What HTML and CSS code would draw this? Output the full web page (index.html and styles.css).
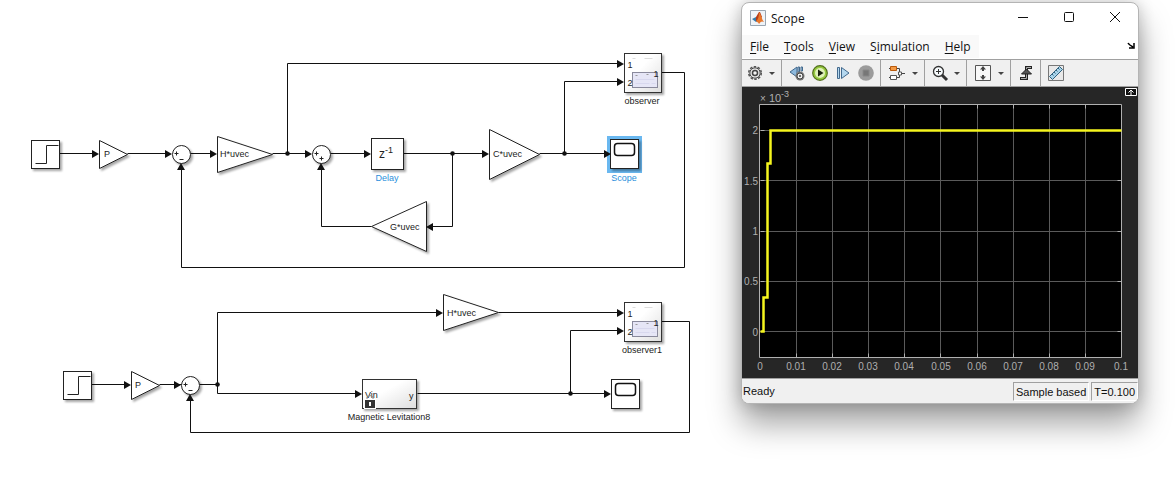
FILE: index.html
```html
<!DOCTYPE html>
<html lang="en">
<head>
<meta charset="utf-8">
<title>Scope</title>
<link rel="stylesheet" href="styles.css">
</head>
<body>
<main class="desk">
  <svg class="model" viewBox="0 0 700 491" role="img" aria-label="Block diagram">
    <defs>
      <filter id="shade" x="-20%" y="-20%" width="150%" height="150%">
        <feDropShadow dx="2" dy="2" stdDeviation="1" flood-color="#000" flood-opacity=".35"/>
      </filter>
      <linearGradient id="sub" x1="0" y1="0" x2="1" y2="1">
        <stop offset=".4" stop-color="#fff"/><stop offset="1" stop-color="#dedede"/>
      </linearGradient>
      <g id="step" class="block"><rect width="28" height="28"/><path class="plain" d="M4 23h11V5h12"/></g>
      <g id="sum"><circle class="block" r="9"/><path class="sign" d="M-7-1h4M-5-3v4"/></g>
      <g id="observer">
        <rect class="block sub" width="37" height="39"/>
        <rect class="preview" x="8" y="19" width="25" height="15"/>
        <path class="detail" d="M11 22h3M22 21h3"/>
        <path class="pale" d="M8 5h3M20 5h8"/>
        <path class="faint" d="M11 26h19M11 30h14M27 30h4"/>
        <text x="3" y="14">1</text><text x="3" y="32">2</text><text x="29" y="23">1</text>
      </g>
      <g id="scope"><rect class="block" width="28" height="29"/><rect class="screen" x="4" y="4" width="20" height="12" rx="3"/></g>
    </defs>

    <rect class="halo" x="607" y="136" width="35" height="37"/>
    <g class="wires" transform="translate(.5 .5)">
      <path d="M59 153h34M127 153h39M190 153h21M272 153h34M330 153h35M403 153h80M539 153h66"/>
      <path d="M287 153V63h331M564 153V81h54M661 72h23v195H181v-98"/>
      <path d="M452 153v73h-20M371 226h-50v-57"/>
      <path d="M91 384h34M159 384h25M199 384h18M356 393H217V312h220M498 312h120"/>
      <path d="M417 393h188M570 393V330h48M661 321h28v111H190V400"/>
    </g>
    <g transform="translate(.5 .5)">
      <use href="#step" x="31" y="140"/><use href="#step" x="63" y="371"/>
      <path class="block" d="M99 140l28 14-28 14zM217 136l55 18-55 18zM489 129l50 25-50 25zM426 201v50l-55-25z"/>
      <path class="block" d="M131 371l28 14-28 14zM443 294l55 18-55 18z"/>
      <use href="#sum" x="181" y="154"/><use href="#sum" x="321" y="154"/><use href="#sum" x="190" y="385"/>
      <path class="sign" d="M179 159h4M188 390h4M319 158h4M321 156v4"/>
      <rect class="block" x="371" y="138" width="32" height="31"/>
      <use href="#observer" x="624" y="53"/><use href="#observer" x="624" y="302"/>
      <use href="#scope" x="610" y="139"/><use href="#scope" x="611" y="379"/>
      <rect class="block sub" x="362" y="379" width="54" height="29"/>
    </g>
    <g class="heads">
      <path d="M99 154l-7-4v8zM172 154l-7-4v8zM217 154l-7-4v8zM312 154l-7-4v8zM371 154l-7-4v8zM489 154l-7-4v8zM611 154l-7-4v8z"/>
      <path d="M624 64l-7-4v8zM624 82l-7-4v8zM426 227l7-4v8zM181 163l-4 7h8zM321 163l-4 7h8z"/>
      <path d="M131 385l-7-4v8zM181 385l-7-4v8zM362 394l-7-4v8zM443 313l-7-4v8zM624 313l-7-4v8zM624 331l-7-4v8zM611 394l-7-4v8zM190 394l-4 7h8z"/>
      <circle cx="287.500" cy="153.500" r="2.300"/><circle cx="452.500" cy="153.500" r="2.300"/><circle cx="564.500" cy="153.500" r="2.300"/>
      <circle cx="217.500" cy="384.500" r="2.300"/><circle cx="570.500" cy="393.500" r="2.300"/>
    </g>
    <g class="words">
      <text x="104" y="157">P</text><text x="135" y="388">P</text>
      <text x="220" y="157">H*uvec</text><text x="493" y="157">C*uvec</text><text x="390" y="230">G*uvec</text><text x="447" y="316">H*uvec</text>
      <text class="big" x="379" y="158">z</text><text x="385" y="153">-1</text>
      <text x="365" y="398">Vin</text><text x="409" y="399">y</text>
      <g class="mid">
        <text x="642" y="104">observer</text><text x="642" y="353">observer1</text><text x="389" y="420">Magnetic Levitation8</text>
        <text class="blue" x="387" y="181">Delay</text><text class="blue" x="624" y="181">Scope</text>
      </g>
    </g>
    <path d="M367 400v-3q3-3 6 0v3" fill="none" stroke="#888"/><path d="M364 399h12v10h-12z" fill="#fff"/><path d="M365 400h10v8h-10z" fill="#333"/><path d="M369 402h2v4h-2z" fill="#fff"/>
  </svg>

  <section class="window" aria-label="Scope">
    <header class="titlebar">
      <svg class="logo" viewBox="0 0 16 16"><path d="M.5.500h15v15H.500z" fill="#eef3f8" stroke="#9aa6b2"/><path d="M2 9l4-2 3 3-3 2z" fill="#3779a8"/><path d="M6 7l3-5 1 0 2 5-4 5-2-1z" fill="#b63b16"/><path d="M9 2c2 2 3 8 5 10-2-1-3-1-5 2-1-2-2-2-3-3 2-1 3-5 3-9z" fill="#e9772b"/></svg>
      <h1>Scope</h1>
      <button aria-label="Minimize"><svg viewBox="0 0 12 12"><path d="M1 6.500h10"/></svg></button>
      <button aria-label="Maximize"><svg viewBox="0 0 12 12"><rect x="1.500" y="1.500" width="9" height="9" rx="1"/></svg></button>
      <button aria-label="Close"><svg viewBox="0 0 12 12"><path d="M1 1l10 10M11 1L1 11"/></svg></button>
    </header>
    <nav class="menubar">
      <div class="menus"><button><u>F</u>ile</button><button><u>T</u>ools</button><button><u>V</u>iew</button><button>S<u>i</u>mulation</button><button><u>H</u>elp</button></div>
      <button class="dock" aria-label="Dock"><svg viewBox="0 0 8 8"><path d="M1 1q1 2 5 4M7 1v5H2" fill="none" stroke="#000" stroke-width="1.500"/></svg></button>
    </nav>
    <div class="toolbar">
      <button class="tool" aria-label="Settings"><svg viewBox="0 0 16 16" fill="none"><circle cx="8" cy="8" r="6.300" stroke="#555" stroke-width="1.500" stroke-dasharray="2.500 1.450"/><circle cx="8" cy="8" r="5.200" fill="#e4e4e4" stroke="#444"/><circle cx="8" cy="8" r="2.500" fill="#f4f4f4" stroke="#444" stroke-width="1.500"/></svg></button>
      <button class="caret" aria-label="More settings"></button>
      <span class="rule"></span>
      <button class="tool" aria-label="Step back"><svg viewBox="0 0 16 16"><path d="M1 7l7-5v10z" fill="#8db9dd" stroke="#42698d"/><path d="M9 2h1.500v5H9zM12 2h1.500v4H12z" fill="#b8d8ef" stroke="#42698d"/><circle cx="11" cy="11" r="4.500" fill="#777"/><circle cx="11" cy="11" r="3" fill="#eee" stroke="#444"/><circle cx="11" cy="11" r="1" fill="#444"/></svg></button>
      <button class="tool" aria-label="Run"><svg viewBox="0 0 16 16"><circle cx="8" cy="8" r="7.300" fill="#94c83e" stroke="#526e1d" stroke-width="1.200"/><circle cx="8" cy="8" r="5" fill="#e0f1ba"/><path d="M6 4.500v7L11.500 8z" fill="#18210c"/></svg></button>
      <button class="tool" aria-label="Step forward"><svg viewBox="0 0 16 16" fill="#b5d8ef" stroke="#42698d"><path d="M2.500 2.500h2v11h-2zM6.500 2.500v11l7.500-5.500z"/></svg></button>
      <button class="tool" aria-label="Stop" disabled><svg viewBox="0 0 16 16"><circle cx="8" cy="8" r="7.800" fill="#9b9b9b"/><path d="M5 5h6v6H5z" fill="#777" stroke="#888"/></svg></button>
      <span class="rule"></span>
      <button class="tool wide" aria-label="Signal selector"><svg viewBox="0 0 16 16" fill="none"><path d="M7.500 3.500h3v4M7.500 12.500h3v-3M13 8.500h3" stroke="#444"/><path d="M1.500 1.500h6v4h-6z" fill="#f59a43" stroke="#b95a0c"/><path d="M1.500 10.500h6v4h-6zM9.500 7h3v3h-3z" fill="#fff" stroke="#555"/><path d="M0 3.500h1M0 12.500h1" stroke="#444"/></svg></button>
      <button class="caret" aria-label="More signals"></button>
      <span class="rule"></span>
      <button class="tool" aria-label="Zoom"><svg viewBox="0 0 16 16" fill="none" stroke="#333"><path d="M10 10l5 5" stroke-width="3"/><circle cx="6.500" cy="6.500" r="5" fill="#f7fbfd" stroke-width="1.300"/><path d="M4 6.500h5M6.500 4v5"/></svg></button>
      <button class="caret" aria-label="More zoom"></button>
      <span class="rule"></span>
      <button class="tool wide" aria-label="Scale axes"><svg viewBox="0 0 16 16"><path d="M.5.500h15v15H.500z" fill="#f8f8f8" stroke="#555"/><path d="M8 1l3 3.500H9V6H7V4.500H5zM8 15l3-3.500H9V10H7v1.500H5z" fill="#444"/></svg></button>
      <button class="caret" aria-label="More scaling"></button>
      <span class="rule"></span>
      <button class="tool" aria-label="Triggers"><svg viewBox="0 0 16 16"><path d="M2 13.500h6.500v-11H14" fill="none" stroke="#222" stroke-width="3"/><path d="M3 13.500h5.500v-11H13" fill="none" stroke="#aaa"/><path d="M8.500 4l5 5h-10z" fill="#555" stroke="#222"/></svg></button>
      <span class="rule"></span>
      <button class="tool" aria-label="Measurements"><svg viewBox="0 0 16 16"><path d="M.5.500h15v15H.500z" fill="#e9e9e9" stroke="#777"/><path d="M1.500 11.500L11.500 1.500 14.500 4.500 4.500 14.500z" fill="#a9d4ea" stroke="#2f627f"/><path d="M4 9l1.500 1.500M6 7l1.500 1.500M8 5l1.500 1.500M10 3l1.500 1.500" stroke="#2f627f"/></svg></button>
    </div>
    <svg class="plot" viewBox="742 87 396 291" role="img" aria-label="Signal plot">
      <rect x="760" y="104" width="361" height="253"/>
      <path class="grid" d="M796 104v253M832 104v253M868 104v253M904 104v253M940 104v253M977 104v253M1013 104v253M1049 104v253M1085 104v253M760 130h361M760 180h361M760 231h361M760 281h361M760 331h361" transform="translate(.5 .5)"/>
      <path class="axis" d="M759 104h362v253H759zM796 104v4m0 245v4M832 104v4m0 245v4M868 104v4m0 245v4M904 104v4m0 245v4M940 104v4m0 245v4M977 104v4m0 245v4M1013 104v4m0 245v4M1049 104v4m0 245v4M1085 104v4m0 245v4M760 130h4m353 0h4M760 180h4m353 0h4M760 231h4m353 0h4M760 281h4m353 0h4M760 331h4m353 0h4" transform="translate(.5 .5)"/>
      <path class="signal" d="M760 331h3V297h4V163h3V130h351" transform="translate(.5 .5)"/>
      <text x="760" y="102">×</text><text class="exp" x="769" y="102">10</text><text class="sup" x="781" y="97">-3</text>
      <g class="end"><text x="758" y="134">2</text><text x="758" y="185">1.5</text><text x="758" y="235">1</text><text x="758" y="285">0.5</text><text x="758" y="336">0</text></g>
      <g class="mid"><text x="760" y="370">0</text><text x="796" y="370">0.01</text><text x="832" y="370">0.02</text><text x="868" y="370">0.03</text><text x="904" y="370">0.04</text><text x="941" y="370">0.05</text><text x="977" y="370">0.06</text><text x="1013" y="370">0.07</text><text x="1049" y="370">0.08</text><text x="1085" y="370">0.09</text><text x="1121" y="370">0.1</text></g>
      <path d="M1125.500 88.500h11v7h-11z" fill="#111" stroke="#fff"/><path d="M1131 95v-5M1128.500 92.500l2.500-2.500 2.500 2.500" fill="none" stroke="#fff"/>
    </svg>
    <footer class="status"><span class="ready">Ready</span><span class="cell">Sample based</span><span class="cell">T=0.100</span></footer>
  </section>
</main>
</body>
</html>
```
FILE: styles.css
```css
* { box-sizing: border-box; }
body { margin: 0; background: #fff; color: #111; font-family: "Liberation Sans", Arial, sans-serif; overflow: hidden; }
.desk { display: grid; grid-template-columns: 28fr 19fr; align-items: start; }
button { border: 0; padding: 0; background: none; font: inherit; color: inherit; }

.model { display: block; width: 100%; font-size: 9px; fill: #222; }
.model .block { fill: #fff; stroke: #222; stroke-width: 1; filter: url(#shade); }
.model .block.sub { fill: url(#sub); stroke: #333; }
.model .plain { fill: none; }
.model .sign { fill: none; stroke: #222; }
.model .preview { fill: #e6e6f6; stroke: #8a8a9c; }
.model .detail { stroke: #999; stroke-dasharray: 2 1; }
.model .pale { stroke: #ddd; }
.model .faint { stroke: #d8d8ee; }
.model .screen { fill: #fff; stroke: #111; stroke-width: 1.5; }
.model .halo { fill: #6ab8f0; }
.wires { fill: none; stroke: #111; }
.heads { fill: #111; }
.big { font-size: 12px; }
.mid { text-anchor: middle; }
.end { text-anchor: end; }
.blue { fill: #2a8fdc; }

.window { margin: 2px 36px 0 41px; border: 1px solid #b4b4b4; border-radius: 8px; overflow: hidden; background: #fff; box-shadow: 0 0 16px rgba(0, 0, 0, .2), 0 20px 32px rgba(0, 0, 0, .36); }
.titlebar { display: flex; align-items: center; height: 30px; padding-left: 8px; }
.logo { width: 16px; height: 16px; }
h1 { flex: 1; margin: 0 0 0 5px; font: 12px "Open Sans", sans-serif; }
.titlebar button { width: 46px; height: 30px; }
.titlebar button svg { width: 12px; height: 12px; fill: none; stroke: #111; }
.menubar { display: flex; align-items: center; justify-content: space-between; height: 26px; padding-right: 3px; font: 12px "Open Sans", sans-serif; }
.menus { display: flex; gap: 15px; padding: 3px 8px; background: #f9f9f9; }
u { text-underline-offset: 2px; }
.dock svg { display: block; width: 8px; height: 8px; }
.toolbar { display: flex; align-items: center; height: 28px; padding-left: 1px; border-top: 1px solid #a0a0a0; border-bottom: 1px solid #a0a0a0; background: #f0f0f0; }
.tool { display: flex; justify-content: center; width: 23px; }
.tool.wide { width: 25px; }
.tool svg { width: 16px; height: 16px; overflow: visible; }
.caret { display: flex; justify-content: center; width: 12px; }
.caret::after { content: ""; border: 3px solid transparent; border-top-color: #444; border-bottom: 0; }
.rule { width: 1px; height: 26px; margin: 0 3px; background: #a0a0a0; }
.plot { display: block; width: 100%; background: #262626; fill: #afafaf; font-size: 10px; }
.plot rect { fill: #000; }
.grid { stroke: #5a5a5a; }
.axis { fill: none; stroke: #b0b0b0; }
.signal { fill: none; stroke: #f5f51e; stroke-width: 2.5; }
.exp { font-size: 11px; }
.sup { font-size: 9px; }
.status { display: flex; align-items: stretch; gap: 2px; height: 25px; padding: 3px 0 2px 1px; border-top: 1px solid #a0a0a0; background: #f0f0f0; font-size: 11px; line-height: 18px; }
.ready { flex: 1; }
.cell { padding: 0 2px; border: 1px solid #a0a0a0; border-right-color: #fff; border-bottom-color: #fff; }
```
